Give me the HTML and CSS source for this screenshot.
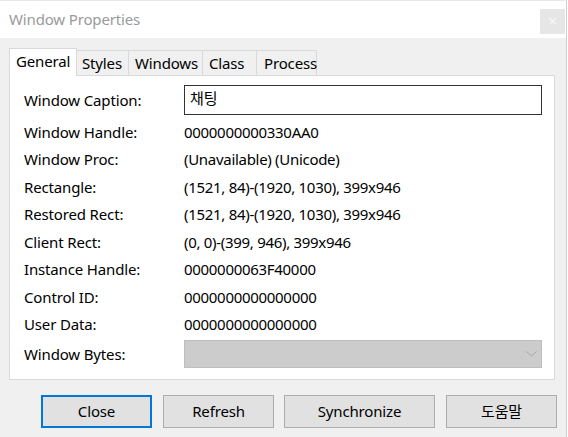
FILE: index.html
```html
<!DOCTYPE html>
<html>
<head>
<meta charset="utf-8">
<link rel="stylesheet" href="styles.css">
</head>
<body>
<div class="window">
  <div class="titlebar">
    <span class="title">Window Properties</span>
    <span class="close-x">×</span>
  </div>
  <div class="client">
    <div class="tabs">
      <div class="tab active">General</div>
      <div class="tab">Styles</div>
      <div class="tab">Windows</div>
      <div class="tab">Class</div>
      <div class="tab">Process</div>
    </div>
    <div class="panel">
      <div class="row caption-row">
        <div class="label">Window Caption:</div>
        <div class="input">채팅</div>
      </div>
      <div class="row"><div class="label">Window Handle:</div><div class="value">0000000000330AA0</div></div>
      <div class="row"><div class="label">Window Proc:</div><div class="value">(Unavailable) (Unicode)</div></div>
      <div class="row"><div class="label">Rectangle:</div><div class="value">(1521, 84)-(1920, 1030), 399x946</div></div>
      <div class="row"><div class="label">Restored Rect:</div><div class="value">(1521, 84)-(1920, 1030), 399x946</div></div>
      <div class="row"><div class="label">Client Rect:</div><div class="value">(0, 0)-(399, 946), 399x946</div></div>
      <div class="row"><div class="label">Instance Handle:</div><div class="value">0000000063F40000</div></div>
      <div class="row"><div class="label">Control ID:</div><div class="value">0000000000000000</div></div>
      <div class="row"><div class="label">User Data:</div><div class="value">0000000000000000</div></div>
      <div class="row bytes-row">
        <div class="label">Window Bytes:</div>
        <div class="combo">
          <svg class="chev" width="11" height="6" viewBox="0 0 11 6"><path d="M0.5 0.5 L5.5 5 L10.5 0.5" fill="none" stroke="#a8a8a8" stroke-width="1"/></svg>
        </div>
      </div>
    </div>
    <div class="buttons">
      <div class="btn default">Close</div>
      <div class="btn">Refresh</div>
      <div class="btn wide">Synchronize</div>
      <div class="btn">도움말</div>
    </div>
  </div>
</div>
</body>
</html>
```
FILE: styles.css
```css
html, body {
  margin: 0;
  padding: 0;
  background: #ffffff;
}
body {
  font-family: "Noto Sans", "Noto Sans CJK KR", sans-serif;
  font-size: 15px;
  color: #000;
  letter-spacing: -0.15px;
}
.window {
  width: 567px;
  height: 437px;
  border-right: 1px solid #cfcfcf;
  border-top: 1px solid #e8e8e8;
  box-sizing: border-box;
  background: #f0f0f0;
  display: flex;
  flex-direction: column;
}
.titlebar {
  height: 37px;
  background: #ffffff;
  display: flex;
  align-items: flex-start;
  justify-content: space-between;
  padding-left: 9px;
}
.title {
  color: #9a9a9a;
  margin-top: 8px;
  font-size: 15px;
}
.close-x {
  width: 25px;
  height: 25px;
  margin-top: 8px;
  margin-right: 1px;
  background: #e6e6e6;
  color: #f7f7f7;
  font-size: 16px;
  line-height: 25px;
  text-align: center;
}
.client {
  padding-left: 9px;
  padding-top: 10px;
  flex: 1;
  display: flex;
  flex-direction: column;
}
.tabs {
  display: flex;
  align-items: flex-end;
  height: 28px;
  position: relative;
  z-index: 1;
  margin-bottom: -1px;
}
.tab {
  height: 25px;
  box-sizing: border-box;
  border: 1px solid #d9d9d9;
  border-bottom: none;
  border-left: none;
  background: #f0f0f0;
  line-height: 24px;
  margin-bottom: 1px;
  white-space: nowrap;
  padding-left: 5px;
}
.tab.active {
  height: 28px;
  background: #ffffff;
  border-left: 1px solid #d9d9d9;
  margin-bottom: 0;
  line-height: 25px;
  width: 68px;
  padding-left: 6px;
}
.tab:nth-child(2) { width: 52px; padding-left: 5px; }
.tab:nth-child(3) { width: 74px; padding-left: 6px; }
.tab:nth-child(4) { width: 54px; padding-left: 6px; }
.tab:nth-child(5) { width: 60px; padding-left: 7px; }
.panel {
  width: 546px;
  height: 305px;
  box-sizing: border-box;
  background: #ffffff;
  border: 1px solid #d9d9d9;
  padding: 9px 0 0 14px;
}
.row {
  display: flex;
  align-items: center;
  height: 27.5px;
}
.label {
  width: 160px;
  flex: none;
}
.value {
  letter-spacing: -0.3px;
}
.caption-row {
  height: 30px;
  margin-bottom: 3px;
}
.input {
  width: 358px;
  height: 30px;
  box-sizing: border-box;
  border: 1px solid #333333;
  padding-left: 5px;
  line-height: 24px;
  font-family: "Noto Sans CJK KR", sans-serif;
}
.bytes-row {
  height: 28px;
  margin-top: 2px;
}
.combo {
  width: 358px;
  height: 28px;
  box-sizing: border-box;
  background: #cccccc;
  border: 1px solid #bfbfbf;
  display: flex;
  align-items: center;
  justify-content: flex-end;
  padding-right: 4px;
}
.buttons {
  display: flex;
  padding-left: 32px;
  margin-top: 15px;
  gap: 11px;
}
.btn {
  width: 111px;
  height: 33px;
  box-sizing: border-box;
  background: #e1e1e1;
  border: 1px solid #adadad;
  text-align: center;
  line-height: 30px;
}
.btn.default {
  border: 2px solid #0078d7;
  line-height: 28px;
}
.btn.wide { width: 151px; }
.btn:nth-child(2) { margin-right: -1px; }
```
